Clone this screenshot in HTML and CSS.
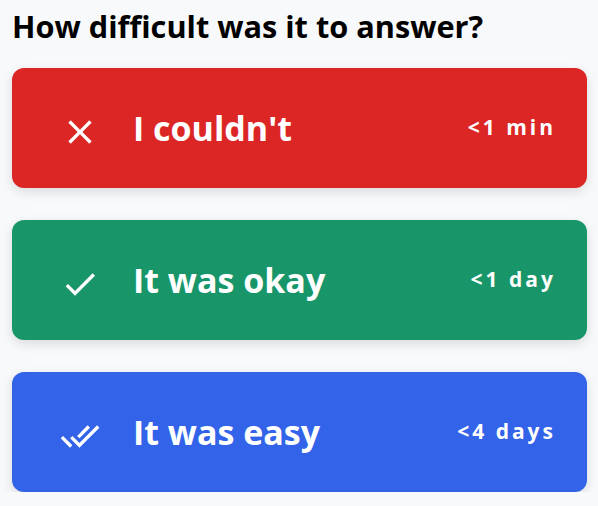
FILE: index.html
```html
<!DOCTYPE html>
<html>
<head>
<meta charset="utf-8">
<link rel="stylesheet" href="styles.css">
</head>
<body>
<main class="page">
  <h1 class="title">How difficult was it to answer?</h1>
  <div class="options">
    <button class="option option-red">
      <svg class="icon" viewBox="0 0 24 24" width="40" height="40"><path fill="#fff" d="M19 6.41L17.59 5 12 10.59 6.41 5 5 6.41 10.59 12 5 17.59 6.41 19 12 13.41 17.59 19 19 17.59 13.41 12z"/></svg>
      <span class="label">I couldn't</span>
      <span class="time">&lt;1 min</span>
    </button>
    <button class="option option-green">
      <svg class="icon" viewBox="0 0 24 24" width="40" height="40"><path fill="#fff" d="M9 16.17L4.83 12l-1.42 1.41L9 19 21 7l-1.41-1.41z"/></svg>
      <span class="label">It was okay</span>
      <span class="time">&lt;1 day</span>
    </button>
    <button class="option option-blue">
      <svg class="icon" viewBox="0 0 24 24" width="40" height="40"><path fill="#fff" d="M18 7l-1.41-1.41-6.34 6.34 1.41 1.41L18 7zm4.24-1.41L11.66 16.17 7.48 12l-1.41 1.41L11.66 19l12-12-1.42-1.41zM.41 13.41L6 19l1.41-1.41L1.83 12 .41 13.41z"/></svg>
      <span class="label">It was easy</span>
      <span class="time">&lt;4 days</span>
    </button>
  </div>
</main>
</body>
</html>
```

FILE: styles.css
```css
html, body {
  margin: 0;
  padding: 0;
  background: #f8f9fb;
}
body {
  font-family: "Open Sans", "Noto Sans", sans-serif;
}
.page {
  padding: 0 11px 0 12px;
}
.title {
  margin: 0;
  padding-top: 6px;
  height: 68px;
  box-sizing: border-box;
  font-size: 30.7px;
  line-height: 40px;
  font-weight: 700;
  color: #000;
}
.options {
  display: flex;
  flex-direction: column;
  gap: 32px;
}
.option {
  display: flex;
  align-items: center;
  height: 120px;
  border: none;
  border-radius: 12px;
  padding: 0 34px 0 48px;
  color: #fff;
  font-family: inherit;
  box-shadow: 0 4px 12px rgba(0, 0, 0, 0.12);
  text-align: left;
}
.option-red { background: #dc2626; }
.option-green { background: #18966a; }
.option-blue { background: #3263e9; }
.icon {
  flex: none;
  margin-top: 8px;
}
.label {
  flex: 1;
  margin-left: 33px;
  font-size: 34px;
  font-weight: 700;
  margin-top: 0;
}
.time {
  font-size: 21px;
  font-weight: 700;
  letter-spacing: 3px;
  margin-right: -3px;
  margin-bottom: 2px;
}
```
